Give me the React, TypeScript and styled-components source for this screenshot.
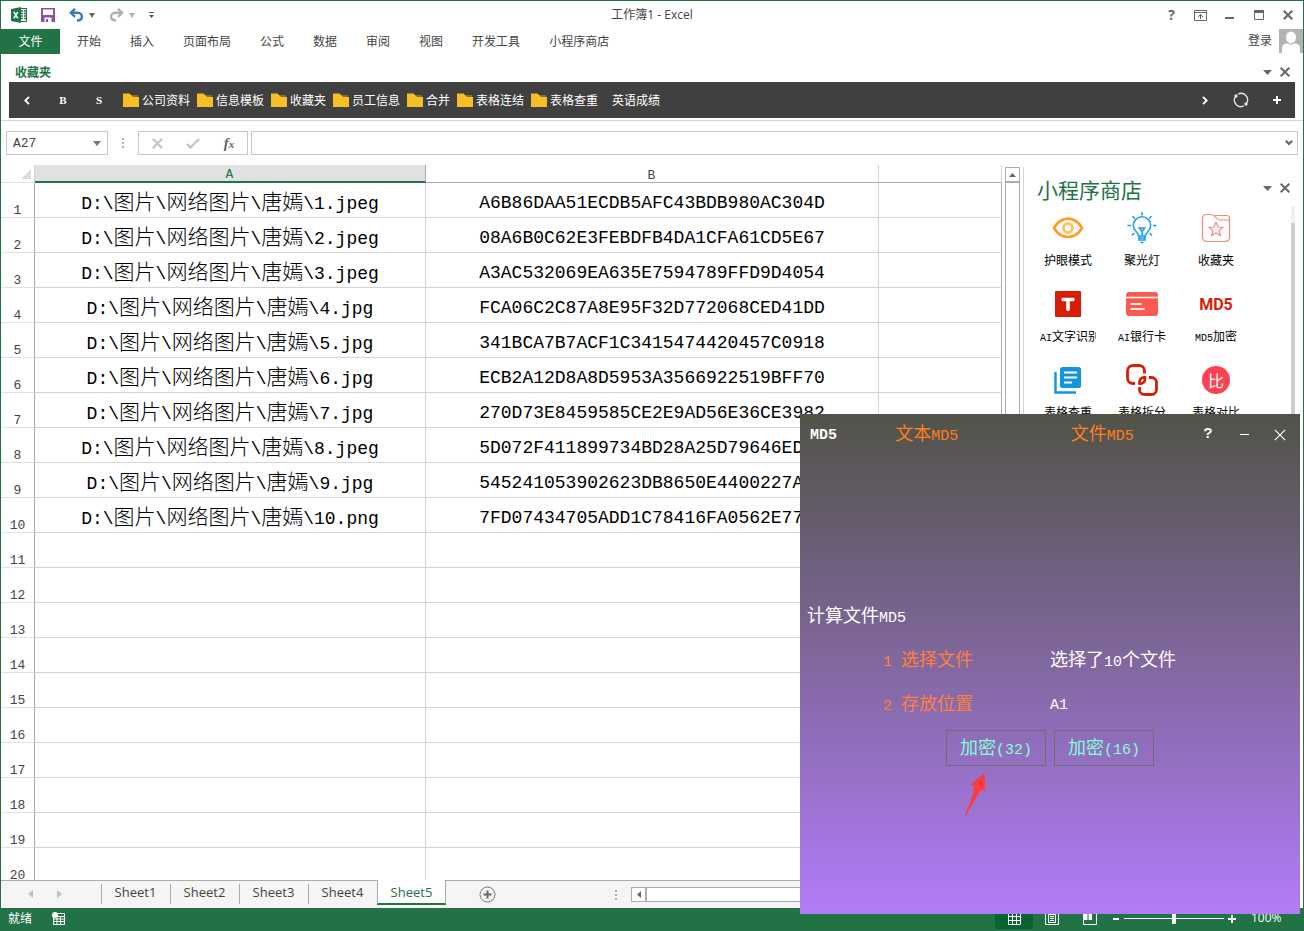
import React from "react";
import styled, { createGlobalStyle } from "styled-components";

const green = "#217346";
const cjk = '"Noto Sans CJK SC", sans-serif';
const ui = '"Open Sans", "Noto Sans CJK SC", sans-serif';
const mono = '"Liberation Mono", "Noto Sans CJK SC", monospace';

const Global = createGlobalStyle`
  *, *::before, *::after { box-sizing: border-box; }
  body { margin: 0; background: #fff; font-family: ${cjk}; font-size: 12px; color: #444; }
  button, input { font: inherit; color: inherit; margin: 0; padding: 0; border: 0; background: none; border-radius: 0; }
  button { display: inline-flex; align-items: center; justify-content: center; white-space: nowrap; flex: none; }
  svg { display: block; flex: none; }
`;

const Shell = styled.div`
  position: relative;
  display: flex;
  flex-direction: column;
  height: 100vh;
  overflow: hidden;
  border: 1px solid ${green};
  border-bottom: 0;
`;

/* ---------- title bar ---------- */
const TitleBar = styled.header`
  display: grid;
  grid-template-columns: 1fr auto 1fr;
  align-items: center;
  height: 28px;
`;
const QuickAccess = styled.div`
  display: flex;
  align-items: center;
  padding-left: 10px;
`;
const QuickButton = styled.button<{ $gap?: number }>`
  height: 20px;
  margin-right: ${(p) => p.$gap ?? 0}px;
`;
const DocTitle = styled.h1`
  margin: 0;
  font: 400 12px/20px ${ui};
`;
const WindowControls = styled.div`
  display: flex;
  justify-content: flex-end;
  padding-right: 1px;
`;
const WindowButton = styled.button`
  width: 29px;
  height: 24px;
  color: #666;
  font: 700 14px/20px ${ui};
`;

/* ---------- ribbon tabs ---------- */
const Ribbon = styled.nav`
  display: flex;
  height: 25px;
`;
const FileTab = styled.button`
  width: 59px;
  height: 25px;
  margin-right: 2px;
  padding-bottom: 2px;
  background: ${green};
  color: #fff;
`;
const RibbonTab = styled.button`
  height: 25px;
  padding: 0 14px 2px 15px;
`;
const Account = styled.button`
  gap: 7px;
  height: 24px;
  margin-left: auto;
`;
const AccountName = styled.span`
  padding-bottom: 4px;
`;

/* ---------- favourites ---------- */
const FavHeader = styled.div`
  display: flex;
  align-items: flex-end;
  justify-content: space-between;
  height: 28px;
  padding: 0 13px 0 14px;
  color: ${green};
  font-weight: 700;
  line-height: 20px;
`;
const PaneButtons = styled.div`
  display: flex;
  align-items: center;
  gap: 8px;
  height: 20px;
`;
const FavWrap = styled.div`
  padding: 0 8px 2px;
  border-bottom: 1px solid #d4d4d4;
`;
const FavBar = styled.div`
  display: flex;
  align-items: center;
  height: 36px;
  background: #404040;
  color: #fff;
`;
const FavButton = styled.button`
  width: 36px;
  height: 36px;
  font: 700 11px/16px "Liberation Serif", serif;
`;
const FavLinks = styled.div`
  display: flex;
  flex: 1;
  gap: 7px;
  padding-left: 6px;
`;
const FavItem = styled.button`
  gap: 3px;
  line-height: 18px;
`;
const FavText = styled.button`
  padding-left: 7px;
  line-height: 18px;
`;

/* ---------- formula bar ---------- */
const FormulaBar = styled.div`
  display: flex;
  align-items: center;
  height: 44px;
  padding: 0 5px;
`;
const Field = styled.div<{ $w?: number }>`
  display: flex;
  align-items: center;
  height: 24px;
  border: 1px solid #c6c6c6;
  ${(p) => (p.$w ? `flex: none; width: ${p.$w}px;` : "flex: 1;")}
`;
const FormulaField = styled(Field)`
  margin-left: 3px;
  padding-right: 4px;
`;
const NameInput = styled.input`
  width: 86px;
  padding: 2px 0 0 6px;
  font: 13px/20px ${mono};
`;
const FormulaInput = styled.input`
  flex: 1;
  min-width: 0;
  height: 20px;
  padding: 0 6px;
`;
const Grip = styled.div`
  display: grid;
  place-content: center;
  gap: 2px;
  width: 30px;
  i { width: 2px; height: 2px; background: #b0b0b0; }
`;
const FxButton = styled.button`
  flex: 1;
  height: 22px;
  font: italic 700 15px/20px "Liberation Serif", serif;
  color: #666;
  small { font-size: 11px; }
`;

/* ---------- workspace ---------- */
const Workspace = styled.main`
  display: flex;
  flex: 1;
  min-height: 0;
`;
const Book = styled.section`
  display: flex;
  flex-direction: column;
  flex: 1;
  min-width: 0;
`;
const SheetArea = styled.div`
  display: flex;
  flex: 1;
  min-height: 0;
`;
const SheetView = styled.div`
  flex: 1;
  min-width: 0;
  overflow: hidden;
`;
const Sheet = styled.table`
  width: 100%;
  table-layout: fixed;
  border-collapse: separate;
  border-spacing: 0;
`;
const ColHead = styled.th<{ $active?: boolean }>`
  height: 18px;
  padding: ${(p) => (p.$active ? 4 : 5)}px 1px 0 0;
  font: 400 13px/12px ${mono};
  vertical-align: bottom;
  border-right: 1px solid #d4d4d4;
  border-bottom: 1px solid #ababab;
  ${(p) => p.$active && `background: #e1e1e1; color: ${green}; border-bottom: 2px solid ${green}; border-right-color: #ababab;`}
`;
const Corner = styled.th`
  height: 18px;
  padding: 0 3px 3px 0;
  border-right: 1px solid #d4d4d4;
  border-bottom: 1px solid #e1e1e1;
  vertical-align: bottom;
  svg { margin-left: auto; }
`;
const RowHead = styled.th`
  height: 35px;
  padding: 0;
  font: 400 13px/13px ${mono};
  vertical-align: bottom;
  border-right: 1px solid #ababab;
  border-bottom: 1px solid #e1e1e1;
`;
const Cell = styled.td<{ $last?: boolean }>`
  height: 35px;
  padding: 6px 0 0;
  overflow: hidden;
  color: #000;
  text-align: center;
  white-space: nowrap;
  font: 300 18px/24px ${mono};
  border-right: 1px solid ${(p) => (p.$last ? "#ababab" : "#d4d4d4")};
  border-bottom: 1px solid #d4d4d4;
`;
const MixedText = styled.span`
  display: inline-block;
`;
const CjkRun = styled.span<{ $size: number }>`
  font-family: ${cjk};
  font-size: ${(p) => p.$size}px;
  line-height: 1;
`;

const VScroll = styled.div`
  display: flex;
  flex-direction: column;
  width: 15px;
  margin: 2px 3px 0;
`;
const ScrollArrow = styled.button`
  width: 15px;
  height: 15px;
  border: 1px solid #ababab;
  background: #fff;
`;
const VTrack = styled.div`
  flex: 1;
  border: 1px solid #ababab;
  border-bottom: 0;
`;

const TabBar = styled.div`
  display: flex;
  height: 28px;
  border-top: 1px solid #ababab;
  background: #f5f5f5;
`;
const TabNav = styled.div`
  display: flex;
  align-items: center;
  gap: 24px;
  width: 100px;
  padding: 0 0 2px 27px;
`;
const SheetTab = styled.button<{ $active?: boolean }>`
  width: 69px;
  height: 20px;
  margin-top: 3px;
  padding: 0 1px 4px 0;
  border-left: 1px solid #ababab;
  font: 13px/18px ${ui};
  ${(p) =>
    p.$active &&
    `height: 25px; margin-top: -1px; padding: 0; background: #fff; color: ${green};
     border-right: 1px solid #ababab; border-bottom: 2px solid ${green};`}
`;
const AddSheet = styled.button`
  width: 82px;
  height: 26px;
`;
const HScroll = styled.div`
  display: flex;
  flex: 1;
  align-items: center;
  max-width: 422px;
  margin-left: auto;
  padding-right: 2px;
`;
const HTrack = styled.div`
  flex: 1;
  height: 15px;
  border: 1px solid #ababab;
  background: #fff;
`;

/* ---------- add-in pane ---------- */
const Pane = styled.aside`
  flex: none;
  width: 280px;
  margin-top: 2px;
  border-left: 1px solid #d4d4d4;
  display: flex;
  flex-direction: column;
`;
const PaneHead = styled.div`
  display: flex;
  align-items: center;
  justify-content: space-between;
  height: 39px;
  padding: 3px 13px 0 13px;
`;
const PaneTitle = styled.h2`
  margin: 0;
  padding-top: 2px;
  color: ${green};
  font: 400 21px/28px ${cjk};
`;
const PaneBody = styled.div`
  display: flex;
  flex: 1;
  justify-content: space-between;
  min-height: 0;
  padding: 0 8px 0 7px;
`;
const Tiles = styled.div`
  display: grid;
  grid-template-columns: repeat(3, 74px);
  grid-auto-rows: 76px;
`;
const Tile = styled.button`
  flex-direction: column;
  justify-content: flex-start;
  color: #000;
`;
const TileArt = styled.span`
  display: grid;
  place-items: center;
  height: 44px;
`;
const TileLabel = styled.span`
  max-width: 56px;
  padding-top: 3px;
  overflow: hidden;
  font: 10px/20px ${mono};
`;
const PaneTrack = styled.div`
  width: 4px;
  padding-top: 17px;
  background: #f0f0f0;
`;
const PaneThumb = styled.div`
  height: 100%;
  background: #cdcdcd;
`;

/* ---------- status bar ---------- */
const StatusBar = styled.footer`
  display: flex;
  align-items: center;
  height: 23px;
  padding: 0 20px 2px 7px;
  background: ${green};
  color: #fff;
`;
const StatusLeft = styled.div`
  display: flex;
  align-items: center;
  gap: 20px;
  flex: 1;
`;
const StatusText = styled.span`
  padding-bottom: 2px;
`;
const ViewButtons = styled.div`
  display: flex;
  margin-right: 3px;
`;
const ViewButton = styled.button<{ $on?: boolean }>`
  width: 38px;
  height: 21px;
  background: ${(p) => (p.$on ? "#0a6332" : "transparent")};
`;
const ZoomButton = styled.button`
  width: 8px;
  height: 16px;
`;
const ZoomRange = styled.input`
  appearance: none;
  width: 100px;
  height: 12px;
  margin: 0 4px;
  background: linear-gradient(#fff, #fff) center / 100% 1px no-repeat;
  &::-webkit-slider-thumb { appearance: none; width: 4px; height: 10px; background: #fff; }
`;
const ZoomLabel = styled.span`
  width: 32px;
  margin-left: 15px;
  padding-bottom: 2px;
  font: 12px/18px ${ui};
`;

/* ---------- MD5 window ---------- */
const Dialog = styled.section`
  position: absolute;
  right: 3px;
  bottom: 17px;
  width: 500px;
  height: 500px;
  background: linear-gradient(#515347, #b27cf8);
  color: #fff;
  font: 15px/24px ${mono};
  ${MixedText} { padding-top: 4px; }
`;
const DialogHead = styled.header`
  display: flex;
  align-items: center;
  height: 40px;
  padding: 0 2px 0 10px;
  margin-bottom: 140px;
`;
const DialogTitle = styled.h2`
  width: 29px;
  margin: 0;
  padding-top: 4px;
  font: 700 15px/24px ${mono};
`;
const DialogTab = styled.button`
  flex: 1;
  height: 40px;
  color: #ff7f1e;
`;
const DialogControl = styled.button`
  width: 36px;
  height: 36px;
  padding-top: 2px;
  font-weight: 700;
`;
const DialogHeading = styled.h3`
  display: flex;
  align-items: center;
  height: 44px;
  margin: 0;
  padding-left: 7px;
  font: 400 15px/24px ${mono};
`;
const Step = styled.div`
  display: flex;
  align-items: center;
  height: 44px;
  padding-left: 83px;
`;
const StepButton = styled.button`
  justify-content: flex-start;
  width: 167px;
  height: 36px;
  color: #ff7f3c;
  white-space: pre;
`;
const Actions = styled.div`
  display: flex;
  gap: 8px;
  padding: 4px 0 0 146px;
`;
const ActionButton = styled.button`
  width: 100px;
  height: 36px;
  border: 1px solid #6e6e6e;
  color: #7fffd4;
`;
const Pointer = styled.svg`
  margin: 7px 0 0 164px;
`;

/* Latin runs keep the parent's size, Chinese runs are set larger. */
function Mixed({ text, size }: { text: string; size: number }) {
  return (
    <MixedText>
      {text.split(/([\u4e00-\u9fff]+)/).filter(Boolean).map((run, i) =>
        /[\u4e00-\u9fff]/.test(run) ? <CjkRun key={i} $size={size}>{run}</CjkRun> : run
      )}
    </MixedText>
  );
}

const Caret = ({ color = "#666", w = 9 }: { color?: string; w?: number }) => (
  <svg width={w} height="5" viewBox="0 0 9 5" preserveAspectRatio="none"><path d="M0 0h9L4.500 5z" fill={color} /></svg>
);
const Close = ({ size = 10, color = "#666", w = 2 }: { size?: number; color?: string; w?: number }) => (
  <svg width={size} height={size} viewBox="0 0 10 10"><path d="M.7.7l8.600 8.600M9.300.7L.7 9.300" stroke={color} strokeWidth={w} /></svg>
);
const Folder = () => (
  <svg width="16" height="14" viewBox="0 0 16 14">
    <path d="M7 2h8v3H7z" fill="#8a6f2c" />
    <path d="M0 .5h6.500l3.500 3.500h6v10H0z" fill="#f6bf26" />
  </svg>
);

const ExcelLogo = () => (
  <svg width="16" height="16" viewBox="0 0 16 16">
    <rect x="8" y="1.500" width="7.500" height="13" fill="#fff" stroke={green} />
    <path d="M10 4h2M13 4h2M10 6.500h2M13 6.500h2M10 9h2M13 9h2M10 11.500h2M13 11.500h2" stroke={green} strokeWidth="1.500" />
    <path d="M0 2l10-2v16L0 14z" fill={green} />
    <path d="M2.800 4.800l4 6.500M6.800 4.800l-4 6.500" stroke="#fff" strokeWidth="1.600" />
  </svg>
);
const SaveIcon = () => (
  <svg width="14" height="14" viewBox="0 0 14 14">
    <path d="M0 0h14v14H0z" fill="#8552a8" />
    <path d="M2 1.500h10v5.500H2zM3.500 9.500h7V14h-7z" fill="#fff" />
    <path d="M5 11h2v3H5z" fill="#8552a8" />
  </svg>
);
const UndoIcon = ({ color, flip }: { color: string; flip?: boolean }) => (
  <svg width="15" height="14" viewBox="0 0 15 14">
    <g transform={flip ? "translate(15 0) scale(-1 1)" : undefined} fill="none" stroke={color} strokeWidth="2.400">
      <path d="M2 4.800h6.500c6 0 6 7.700-.5 7.700" />
      <path d="M6 .8L1.800 4.800 6 8.800" />
    </g>
  </svg>
);

const EyeIcon = () => (
  <svg width="32" height="22" viewBox="0 0 32 22" fill="none">
    <path d="M2 11C9-1.500 23-1.500 30 11 23 23 9 23 2 11z" stroke="#ff9b1f" strokeWidth="2.600" />
    <circle cx="16" cy="11" r="4.500" stroke="#ffbf6e" strokeWidth="3" />
  </svg>
);
const BulbIcon = () => (
  <svg width="30" height="34" viewBox="0 0 30 34" fill="none" stroke="#1d9bf0" strokeWidth="1.500">
    <path d="M11.500 25c0-4-5.200-5-5.200-10.500a8.700 8.700 0 0 1 17.400 0C23.700 20 18.500 21 18.500 25z" />
    <path d="M12 25v4h6v-4M12 27h6M13.500 31.500h3M12.300 17h5.400L15 20.500zM15 20.500V25" />
    <path d="M15 1v3.500M5.500 5l2.200 2.500M24.500 5l-2.200 2.500M.5 14.500H4M26 14.500h3.500M5 24.500L7.300 22M25 24.500L22.700 22" />
  </svg>
);
const StarFolderIcon = () => (
  <svg width="30" height="30" viewBox="0 0 30 30" fill="none" stroke="#f58a75" strokeWidth="1.200">
    <path d="M1.500 6c0-3 1.500-4.500 4-4.500h5c3 0 4 4.500 8 5.500h8c1.500 0 2 .8 2 2v14.500c0 3-1.500 5-4.500 5H6c-3 0-4.500-2-4.500-5z" />
    <path d="M13.500 2.500h12c2 0 3 1 3 3V9" />
    <path d="M15 9.500l2 4.500 4.800.4-3.700 3.200 1.200 4.800L15 19.800l-4.300 2.600 1.200-4.800-3.700-3.200L13 14z" />
  </svg>
);
const TextIcon = () => (
  <svg width="26" height="26" viewBox="0 0 26 26">
    <rect width="26" height="26" rx="1" fill="#d81e06" />
    <path d="M8 8.500h10M13 8.500v10" stroke="#fff" strokeWidth="3.600" strokeLinecap="round" />
  </svg>
);
const CardIcon = () => (
  <svg width="34" height="26" viewBox="0 0 34 26">
    <rect x="1" y="1" width="32" height="24" rx="3" fill="#ff5a52" />
    <path d="M1 6.500h32" stroke="#fff" strokeWidth="1.500" />
    <path d="M5.500 13h11M5.500 18h14" stroke="#ffe9e7" strokeWidth="2" />
  </svg>
);
const Md5Mark = styled.span`
  padding-top: 2px;
  color: #d81e06;
  font: 700 16px/24px Roboto, sans-serif;
`;
const PagesIcon = () => (
  <svg width="28" height="28" viewBox="0 0 28 28">
    <path d="M1.500 6v20.500H22" fill="none" stroke="#1296db" strokeWidth="2.400" />
    <rect x="6" y="1" width="21" height="21" rx="2.500" fill="#1296db" />
    <path d="M10 6.500h13M10 11.500h13M10 16.500h8" stroke="#fff" strokeWidth="2.200" />
  </svg>
);
const SplitIcon = () => (
  <svg width="34" height="34" viewBox="0 0 34 34" fill="none" stroke="#d81e06" strokeWidth="2.800">
    <path d="M10 20.500H8A5.500 5.500 0 0 1 2.500 15V8A5.500 5.500 0 0 1 8 2.500h6A5.500 5.500 0 0 1 19.500 8v2.500" />
    <path d="M24 14.500h2.500A5 5 0 0 1 31.500 20v6.500a5 5 0 0 1-5 5h-7a5 5 0 0 1-5-5V24" />
    <path d="M14.500 20.500c-.5-4 2-6.500 5.500-6 .3 4-1.500 6.300-5.500 6z" />
  </svg>
);
const Badge = styled.span`
  display: grid;
  place-items: center;
  width: 28px;
  height: 28px;
  border-radius: 14px;
  background: #ff4154;
  color: #fff;
  font: 400 16px/24px ${cjk};
`;

const ribbonTabs = ["开始", "插入", "页面布局", "公式", "数据", "审阅", "视图", "开发工具", "小程序商店"];
const folders = ["公司资料", "信息模板", "收藏夹", "员工信息", "合并", "表格连结", "表格查重"];
const rows: [string, string][] = [
  ["D:\\图片\\网络图片\\唐嫣\\1.jpeg", "A6B86DAA51ECDB5AFC43BDB980AC304D"],
  ["D:\\图片\\网络图片\\唐嫣\\2.jpeg", "08A6B0C62E3FEBDFB4DA1CFA61CD5E67"],
  ["D:\\图片\\网络图片\\唐嫣\\3.jpeg", "A3AC532069EA635E7594789FFD9D4054"],
  ["D:\\图片\\网络图片\\唐嫣\\4.jpg", "FCA06C2C87A8E95F32D772068CED41DD"],
  ["D:\\图片\\网络图片\\唐嫣\\5.jpg", "341BCA7B7ACF1C3415474420457C0918"],
  ["D:\\图片\\网络图片\\唐嫣\\6.jpg", "ECB2A12D8A8D5953A3566922519BFF70"],
  ["D:\\图片\\网络图片\\唐嫣\\7.jpg", "270D73E8459585CE2E9AD56E36CE3982"],
  ["D:\\图片\\网络图片\\唐嫣\\8.jpeg", "5D072F411899734BD28A25D79646ED"],
  ["D:\\图片\\网络图片\\唐嫣\\9.jpg", "545241053902623DB8650E4400227A"],
  ["D:\\图片\\网络图片\\唐嫣\\10.png", "7FD07434705ADD1C78416FA0562E77"],
];
/* Digests that run on underneath the MD5 window keep their full 32-character width. */
const pad = (s: string) => s.padEnd(32, "\u00a0");

const tiles: [string, React.ReactNode][] = [
  ["护眼模式", <EyeIcon />],
  ["聚光灯", <BulbIcon />],
  ["收藏夹", <StarFolderIcon />],
  ["AI文字识别", <TextIcon />],
  ["AI银行卡", <CardIcon />],
  ["MD5加密", <Md5Mark>MD5</Md5Mark>],
  ["表格查重", <PagesIcon />],
  ["表格拆分", <SplitIcon />],
  ["表格对比", <Badge>比</Badge>],
];
const sheets = ["Sheet1", "Sheet2", "Sheet3", "Sheet4", "Sheet5"];

export default function App() {
  return (
    <>
      <Global />
      <Shell>
        <TitleBar>
          <QuickAccess>
            <QuickButton $gap={14} aria-label="Excel"><ExcelLogo /></QuickButton>
            <QuickButton $gap={14} aria-label="保存"><SaveIcon /></QuickButton>
            <QuickButton $gap={5} aria-label="撤消"><UndoIcon color="#3e7ab8" /></QuickButton>
            <QuickButton $gap={14} aria-label="撤消列表"><Caret w={6} /></QuickButton>
            <QuickButton $gap={5} aria-label="恢复"><UndoIcon color="#b1b1b1" flip /></QuickButton>
            <QuickButton $gap={14} aria-label="恢复列表"><Caret w={6} color="#b1b1b1" /></QuickButton>
            <QuickButton aria-label="自定义">
              <svg width="5" height="6" viewBox="0 0 5 6"><path d="M0 0h5v1H0zM0 3h5L2.500 6z" fill="#555" /></svg>
            </QuickButton>
          </QuickAccess>
          <DocTitle>工作簿1 - Excel</DocTitle>
          <WindowControls>
            <WindowButton aria-label="帮助">?</WindowButton>
            <WindowButton aria-label="功能区显示选项">
              <svg width="13" height="11" viewBox="0 0 13 11" fill="none" stroke="#666"><path d="M.5.500h12v10H.5zM.5 2.500h12M6.500 9V4.500M4 7l2.500-2.500L9 7" /></svg>
            </WindowButton>
            <WindowButton aria-label="最小化">
              <svg width="9" height="8" viewBox="0 0 9 8"><path d="M0 6h9v2H0z" fill="#666" /></svg>
            </WindowButton>
            <WindowButton aria-label="最大化">
              <svg width="10" height="10" viewBox="0 0 10 10"><path d="M.5.500h9v9h-9z" fill="none" stroke="#666" /><path d="M0 0h10v3H0z" fill="#666" /></svg>
            </WindowButton>
            <WindowButton aria-label="关闭"><Close /></WindowButton>
          </WindowControls>
        </TitleBar>

        <Ribbon>
          <FileTab>文件</FileTab>
          {ribbonTabs.map((t) => <RibbonTab key={t}>{t}</RibbonTab>)}
          <Account>
            <AccountName>登录</AccountName>
            <svg width="24" height="24" viewBox="0 0 24 24">
              <path d="M0 0h24v24H0z" fill="#b3b3b3" />
              <ellipse cx="12" cy="8.500" rx="5" ry="6" fill="#fff" />
              <path d="M3 24v-4c0-4 2-5.500 5.500-5.500 2 1.500 5 1.500 7 0 3.500 0 5.500 1.500 5.500 5.500v4z" fill="#fff" />
            </svg>
          </Account>
        </Ribbon>

        <FavHeader>
          收藏夹
          <PaneButtons>
            <button aria-label="选项"><Caret /></button>
            <button aria-label="关闭收藏夹"><Close /></button>
          </PaneButtons>
        </FavHeader>
        <FavWrap>
          <FavBar>
            <FavButton aria-label="上一页">
              <svg width="6" height="9" viewBox="0 0 6 9"><path d="M5 .8L1.300 4.500 5 8.200" fill="none" stroke="#fff" strokeWidth="1.800" /></svg>
            </FavButton>
            <FavButton>B</FavButton>
            <FavButton>S</FavButton>
            <FavLinks>
              {folders.map((f) => <FavItem key={f}><Folder />{f}</FavItem>)}
              <FavText>英语成绩</FavText>
            </FavLinks>
            <FavButton aria-label="下一页">
              <svg width="6" height="9" viewBox="0 0 6 9"><path d="M1 .8l3.700 3.700L1 8.200" fill="none" stroke="#fff" strokeWidth="1.800" /></svg>
            </FavButton>
            <FavButton aria-label="刷新">
              <svg width="16" height="16" viewBox="0 0 16 16" fill="none" stroke="#e8e8e8" strokeWidth="1.300">
                <path d="M5 2.200A6.500 6.500 0 0 1 13.800 11M11 13.800A6.500 6.500 0 0 1 2.200 5" />
                <circle cx="3" cy="4" r="1" fill="#fff" /><circle cx="13" cy="12" r="1" fill="#fff" />
              </svg>
            </FavButton>
            <FavButton aria-label="添加">
              <svg width="8" height="8" viewBox="0 0 8 8"><path d="M0 4h8M4 0v8" stroke="#fff" strokeWidth="2" /></svg>
            </FavButton>
          </FavBar>
        </FavWrap>

        <FormulaBar>
          <Field $w={102}>
            <NameInput aria-label="名称框" defaultValue="A27" />
            <button aria-label="名称列表"><Caret w={8} color="#777" /></button>
          </Field>
          <Grip><i /><i /><i /></Grip>
          <Field $w={110}>
            <FxButton aria-label="取消"><Close size={11} color="#c6c6c6" /></FxButton>
            <FxButton aria-label="输入">
              <svg width="14" height="11" viewBox="0 0 14 11"><path d="M1 6l3.500 3.500L13 1" fill="none" stroke="#c6c6c6" strokeWidth="2.400" /></svg>
            </FxButton>
            <FxButton aria-label="插入函数"><span>f<small>x</small></span></FxButton>
          </Field>
          <FormulaField>
            <FormulaInput aria-label="编辑栏" />
            <button aria-label="展开编辑栏">
              <svg width="8" height="6" viewBox="0 0 8 6"><path d="M.8.800L4 4l3.200-3.200" fill="none" stroke="#666" strokeWidth="2" /></svg>
            </button>
          </FormulaField>
        </FormulaBar>

        <Workspace>
          <Book>
            <SheetArea>
              <SheetView>
                <Sheet>
                  <colgroup>
                    <col width="34" />
                    <col width="391" />
                    <col width="453" />
                    <col />
                  </colgroup>
                  <thead>
                    <tr>
                      <Corner aria-label="全选">
                        <svg width="10" height="10" viewBox="0 0 10 10"><path d="M10 0v10H0z" fill="#dcdcdc" /></svg>
                      </Corner>
                      <ColHead scope="col" $active>A</ColHead>
                      <ColHead scope="col">B</ColHead>
                      <ColHead scope="col" aria-label="C" />
                    </tr>
                  </thead>
                  <tbody>
                    {Array.from({ length: 20 }, (_, i) => (
                      <tr key={i}>
                        <RowHead scope="row">{i + 1}</RowHead>
                        <Cell>{rows[i] && <Mixed text={rows[i][0]} size={21} />}</Cell>
                        <Cell>{rows[i] && pad(rows[i][1])}</Cell>
                        <Cell $last />
                      </tr>
                    ))}
                  </tbody>
                </Sheet>
              </SheetView>
              <VScroll>
                <ScrollArrow aria-label="向上滚动">
                  <svg width="7" height="4" viewBox="0 0 7 4"><path d="M0 4h7L3.500 0z" fill="#666" /></svg>
                </ScrollArrow>
                <VTrack />
              </VScroll>
            </SheetArea>
            <TabBar>
              <TabNav>
                <button aria-label="上一个工作表"><svg width="5" height="8" viewBox="0 0 5 8"><path d="M5 0v8L0 4z" fill="#c0c0c0" /></svg></button>
                <button aria-label="下一个工作表"><svg width="5" height="8" viewBox="0 0 5 8"><path d="M0 0v8l5-4z" fill="#c0c0c0" /></svg></button>
              </TabNav>
              {sheets.map((s) => <SheetTab key={s} $active={s === "Sheet5"}>{s}</SheetTab>)}
              <AddSheet aria-label="新工作表">
                <svg width="17" height="17" viewBox="0 0 17 17"><circle cx="8.500" cy="8.500" r="7.500" fill="none" stroke="#777" /><path d="M4.500 8.500h8M8.500 4.500v8" stroke="#666" strokeWidth="2" /></svg>
              </AddSheet>
              <HScroll>
                <Grip><i /><i /><i /></Grip>
                <ScrollArrow aria-label="向左滚动">
                  <svg width="4" height="7" viewBox="0 0 4 7"><path d="M4 0v7L0 3.500z" fill="#666" /></svg>
                </ScrollArrow>
                <HTrack />
              </HScroll>
            </TabBar>
          </Book>

          <Pane>
            <PaneHead>
              <PaneTitle>小程序商店</PaneTitle>
              <PaneButtons>
                <button aria-label="任务窗格选项"><Caret /></button>
                <button aria-label="关闭任务窗格"><Close /></button>
              </PaneButtons>
            </PaneHead>
            <PaneBody>
              <Tiles>
                {tiles.map(([label, art]) => (
                  <Tile key={label}>
                    <TileArt>{art}</TileArt>
                    <TileLabel><Mixed text={label} size={12} /></TileLabel>
                  </Tile>
                ))}
              </Tiles>
              <PaneTrack><PaneThumb /></PaneTrack>
            </PaneBody>
          </Pane>
        </Workspace>

        <StatusBar>
          <StatusLeft>
            <StatusText>就绪</StatusText>
            <button aria-label="录制宏">
              <svg width="13" height="13" viewBox="0 0 13 13">
                <path d="M1.500 4.500h11v8h-11zM1.500 7h11M1.500 9.500h11M5 4.500v8M8.500 4.500v8M6 1.500h6.500v3" fill="none" stroke="#fff" />
                <circle cx="3" cy="3" r="3" fill="#fff" />
              </svg>
            </button>
          </StatusLeft>
          <ViewButtons>
            <ViewButton $on aria-label="普通">
              <svg width="13" height="13" viewBox="0 0 13 13"><path d="M.5.500h12v12H.5zM.5 4.500h12M.5 8.500h12M4.500.500v12M8.500.500v12" fill="none" stroke="#fff" /></svg>
            </ViewButton>
            <ViewButton aria-label="页面布局视图">
              <svg width="14" height="13" viewBox="0 0 14 13"><path d="M.5.500h13v12H.5zM3.500 2.500h7v8h-7zM5 4.500h4M5 6.500h4M5 8.500h4" fill="none" stroke="#fff" /></svg>
            </ViewButton>
            <ViewButton aria-label="分页预览">
              <svg width="14" height="13" viewBox="0 0 14 13"><path d="M.5.500h13v12H.5z" fill="none" stroke="#fff" /><path d="M1 1h3.500v7H1zM5.500 1H9v7H5.500z" fill="#fff" /></svg>
            </ViewButton>
          </ViewButtons>
          <ZoomButton aria-label="缩小"><svg width="6" height="8" viewBox="0 0 6 8"><path d="M0 3h6v2H0z" fill="#fff" /></svg></ZoomButton>
          <ZoomRange type="range" min={0} max={200} defaultValue={100} aria-label="缩放" />
          <ZoomButton aria-label="放大"><svg width="8" height="8" viewBox="0 0 8 8"><path d="M0 4h8M4 0v8" stroke="#fff" strokeWidth="2" /></svg></ZoomButton>
          <ZoomLabel>100%</ZoomLabel>
        </StatusBar>

        <Dialog role="dialog" aria-label="MD5">
          <DialogHead>
            <DialogTitle>MD5</DialogTitle>
            <DialogTab><Mixed text="文本MD5" size={18} /></DialogTab>
            <DialogTab><Mixed text="文件MD5" size={18} /></DialogTab>
            <DialogControl aria-label="帮助">?</DialogControl>
            <DialogControl aria-label="最小化"><svg width="9" height="2" viewBox="0 0 9 2"><path d="M0 0h9v1H0z" fill="#fff" /></svg></DialogControl>
            <DialogControl aria-label="关闭"><Close size={12} color="#fff" w={1} /></DialogControl>
          </DialogHead>
          <DialogHeading><Mixed text="计算文件MD5" size={18} /></DialogHeading>
          <Step>
            <StepButton><Mixed text="1 选择文件" size={18} /></StepButton>
            <Mixed text="选择了10个文件" size={18} />
          </Step>
          <Step>
            <StepButton><Mixed text="2 存放位置" size={18} /></StepButton>
            <Mixed text="A1" size={18} />
          </Step>
          <Actions>
            <ActionButton><Mixed text="加密(32)" size={18} /></ActionButton>
            <ActionButton><Mixed text="加密(16)" size={18} /></ActionButton>
          </Actions>
          <Pointer width="22" height="44" viewBox="0 0 22 44">
            <path d="M20.500 0L7 11.500l3.500 1.500C9 23 5 33 1 42.500l1 .5C6 34 12 25 17 16.500l4.500 1.500z" fill="#ff3b3b" />
          </Pointer>
        </Dialog>
      </Shell>
    </>
  );
}
